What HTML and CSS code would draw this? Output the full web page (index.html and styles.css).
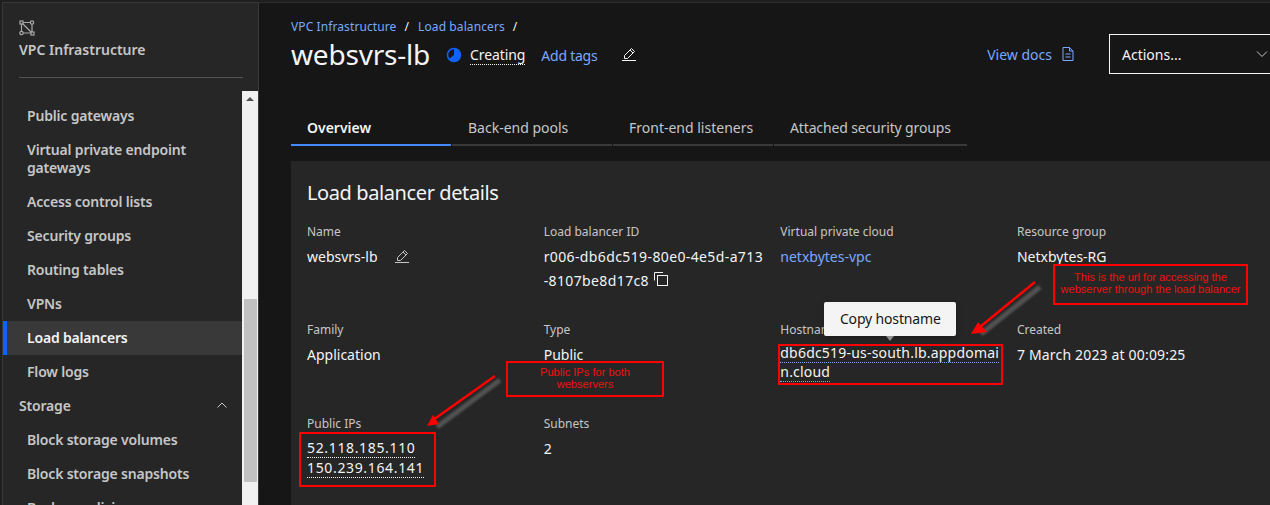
FILE: index.html
```html
<!DOCTYPE html>
<html lang="en">

<head>
    <meta charset="UTF-8">
    <title>websvrs-lb</title>
    <link rel="stylesheet" href="styles.css">
</head>

<body>
    <div class="page">
        <aside class="sidebar">
            <div class="side-head">
                <svg class="side-logo" width="16" height="16" viewBox="0 0 16 16" fill="none" stroke="#a8a8a8" stroke-width="1.200">
                    <rect x="1" y="1" width="3" height="3"/>
                    <circle cx="13" cy="2.500" r="1.700"/>
                    <circle cx="2.500" cy="13" r="1.700"/>
                    <rect x="12" y="12" width="3" height="3"/>
                    <path d="M4 2.500h7.300M2.500 4v7.300M4.200 13H12M13 4.200V12M4 4l8 8"/>
                </svg>
                <div class="side-title">VPC Infrastructure</div>
                <div class="side-rule"></div>
            </div>
            <div class="side-body">
                <nav class="side-nav">
                    <a class="nav-item">Public gateways</a>
                    <a class="nav-item">Virtual private endpoint gateways</a>
                    <a class="nav-item">Access control lists</a>
                    <a class="nav-item">Security groups</a>
                    <a class="nav-item">Routing tables</a>
                    <a class="nav-item">VPNs</a>
                    <a class="nav-item active">Load balancers</a>
                    <a class="nav-item">Flow logs</a>
                    <div class="nav-group">
                        <span>Storage</span>
                        <svg width="16" height="16" viewBox="0 0 16 16" fill="none" stroke="#c6c6c6" stroke-width="1"><path d="M3.500 10.500L8 6l4.500 4.500"/></svg>
                    </div>
                    <a class="nav-item">Block storage volumes</a>
                    <a class="nav-item">Block storage snapshots</a>
                    <a class="nav-item">Backup policies</a>
                </nav>
                <div class="scrollbar">
                    <div class="scroll-up"></div>
                    <div class="scroll-thumb"></div>
                </div>
            </div>
        </aside>

        <main class="main">
            <div class="crumbs">
                <a>VPC Infrastructure</a><span class="slash">/</span><a>Load balancers</a><span class="slash">/</span>
            </div>
            <div class="title-row">
                <h1>websvrs-lb</h1>
                <svg class="status-icon" width="16" height="16" viewBox="0 0 16 16">
                    <circle cx="8" cy="8" r="6.500" fill="none" stroke="#0f62fe" stroke-width="1.500"/>
                    <path d="M8 8V1.500A6.500 6.500 0 1 1 2.800 12z" fill="#0f62fe"/>
                </svg>
                <span class="status">Creating</span>
                <a class="add-tags">Add tags</a>
                <svg class="edit-icon" width="16" height="16" viewBox="0 0 16 16" fill="none" stroke="#f4f4f4" stroke-width="1">
                    <path d="M1 14.500h14M3.500 12.500v-3L10.500 2.500l3 3-7 7zM9 4l3 3"/>
                </svg>
                <div class="title-actions">
                    <a class="docs">View docs</a>
                    <svg class="docs-icon" width="16" height="16" viewBox="0 0 16 16" fill="none" stroke="#78a9ff" stroke-width="1">
                        <path d="M3 1.500h6.500l3.500 3.500v9.500H3zM9.500 1.500V5H13M5.500 8h5M5.500 11h5"/>
                    </svg>
                    <div class="actions">
                        <span>Actions...</span>
                        <svg width="16" height="16" viewBox="0 0 16 16" fill="none" stroke="#c6c6c6" stroke-width="1"><path d="M3 5.500L8 10.500l5-5"/></svg>
                    </div>
                </div>
            </div>

            <div class="tabs">
                <div class="tab selected">Overview</div>
                <div class="tab">Back-end pools</div>
                <div class="tab">Front-end listeners</div>
                <div class="tab wide">Attached security groups</div>
            </div>

            <section class="card">
                <h2>Load balancer details</h2>
                <div class="details">
                    <div class="field">
                        <div class="label">Name</div>
                        <div class="value">websvrs-lb
                            <svg class="name-edit" width="16" height="16" viewBox="0 0 16 16" fill="none" stroke="#c6c6c6" stroke-width="1">
                                <path d="M1 14.500h14M3.500 12.500v-3L10.500 2.500l3 3-7 7zM9 4l3 3"/>
                            </svg>
                        </div>
                    </div>
                    <div class="field">
                        <div class="label">Load balancer ID</div>
                        <div class="value code">r006-db6dc519-80e0-4e5d-a713-8107be8d17c8
                            <svg class="copy-icon" width="16" height="16" viewBox="0 0 16 16" fill="none" stroke="#f4f4f4" stroke-width="1">
                                <rect x="4.500" y="4.500" width="10" height="10"/>
                                <path d="M1.500 9.500V1.500H10"/>
                            </svg>
                        </div>
                    </div>
                    <div class="field">
                        <div class="label">Virtual private cloud</div>
                        <div class="value link">netxbytes-vpc</div>
                    </div>
                    <div class="field">
                        <div class="label">Resource group</div>
                        <div class="value">Netxbytes-RG</div>
                    </div>

                    <div class="field">
                        <div class="label">Family</div>
                        <div class="value">Application</div>
                    </div>
                    <div class="field">
                        <div class="label">Type</div>
                        <div class="value">Public</div>
                    </div>
                    <div class="field">
                        <div class="label">Hostname</div>
                        <div class="value host"><span class="dotted-blue">db6dc519-us-south.lb.appdomain.cloud</span></div>
                        <div class="tooltip">Copy hostname</div>
                    </div>
                    <div class="field">
                        <div class="label">Created</div>
                        <div class="value date">7 March 2023 at 00:09:25</div>
                    </div>

                    <div class="field">
                        <div class="label">Public IPs</div>
                        <div class="value ips">
                            <span class="dotted">52.118.185.110</span>
                            <span class="dotted">150.239.164.141</span>
                        </div>
                    </div>
                    <div class="field">
                        <div class="label">Subnets</div>
                        <div class="value">2</div>
                    </div>
                </div>
            </section>
        </main>

        <!-- red markup someone drew on top of the screenshot -->
        <div class="note note-url">This is the url for accessing the webserver through the load balancer</div>
        <div class="note note-ips">Public IPs for both webservers</div>
        <div class="mark mark-host"></div>
        <div class="mark mark-ips"></div>
        <svg class="arrows" width="1270" height="505" viewBox="0 0 1270 505">
            <g class="arrow-shadow" fill="none" stroke="#666" stroke-width="5">
                <path d="M1040 287L981 334"/>
                <path d="M500 380L437 427"/>
            </g>
            <g stroke="#f00" fill="none" stroke-width="2.500">
                <path d="M1035 282L980 327"/>
                <path d="M495 376L433 420"/>
            </g>
            <path d="M971 334L978 322L987 332z" fill="#f00"/>
            <path d="M427 426L433 415L439 424z" fill="#f00"/>
        </svg>
    </div>
</body>
</html>
```

FILE: styles.css
```css
* {
    box-sizing: border-box;
}

html,
body {
    margin: 0;
    height: 100%;
    overflow: hidden;
    background-color: #161616;
}

body {
    font-family: "Noto Sans", sans-serif;
    font-size: 14px;
    color: #f4f4f4;
}

.page {
    position: relative;
    display: flex;
    width: 1270px;
    height: 505px;
    overflow: hidden;
    border-top: 2px solid #1f1f1f;
    border-left: 2px solid #1f1f1f;
}

/* sidebar */
.sidebar {
    display: flex;
    flex-direction: column;
    flex: none;
    width: 257px;
    background-color: #262626;
    border-top: 1px solid #393939;
    border-left: 1px solid #393939;
    border-right: 1px solid #393939;
}

.side-head {
    height: 88px;
    padding: 17px 15px 0 16px;
}

.side-logo {
    display: block;
    margin-bottom: 3px;
}

.side-title {
    height: 22px;
    line-height: 22px;
    font-weight: 600;
    color: #c6c6c6;
}

.side-rule {
    height: 1px;
    margin-top: 16px;
    background-color: #525252;
}

.side-body {
    display: flex;
    flex: 1;
    min-height: 0;
}

.side-nav {
    flex: 1;
    padding-top: 8px;
    letter-spacing: -0.18px;
}

.nav-item {
    display: block;
    padding: 8px 24px;
    line-height: 18px;
    font-weight: 600;
    color: #c6c6c6;
}

.nav-item.active {
    color: #f4f4f4;
    background-color: #393939;
    border-left: 4px solid #0f62fe;
    padding-left: 20px;
}

.nav-group {
    display: flex;
    justify-content: space-between;
    align-items: center;
    height: 34px;
    padding: 0 12px 2px 16px;
    font-weight: 600;
    color: #c6c6c6;
}

.scrollbar {
    flex: none;
    width: 16px;
    background-color: #f1f1f1;
}

.scroll-up {
    width: 0;
    margin: 6px auto 0;
    border: 4px solid transparent;
    border-top: 0;
    border-bottom: 4px solid #505050;
}

.scroll-thumb {
    width: 13px;
    height: 183px;
    margin-top: 198px;
    margin-left: 2px;
    background-color: #c1c1c1;
}

/* main column */
.main {
    flex: 1;
    min-width: 0;
    padding: 15px 0 0 32px;
    border-top: 1px solid #2e2e2e;
}

.crumbs {
    height: 18px;
    line-height: 18px;
    font-size: 12px;
    letter-spacing: 0.1px;
    color: #f4f4f4;
}

.crumbs a {
    color: #78a9ff;
}

.slash {
    margin: 0 9px 0 8px;
}

.title-row {
    display: flex;
    align-items: center;
    height: 38px;
    margin-top: -1px;
}

h1 {
    margin: 0;
    font-size: 28px;
    font-weight: 400;
    letter-spacing: -0.2px;
    color: #f4f4f4;
}

.status-icon {
    margin: 2px 0 0 16px;
}

.status {
    margin: 2px 0 0 8px;
    letter-spacing: -0.1px;
    border-bottom: 1px dotted #f4f4f4;
}

.add-tags {
    margin: 2px 0 0 16px;
    letter-spacing: -0.25px;
    color: #78a9ff;
}

.edit-icon {
    margin-left: 24px;
}

.title-actions {
    display: flex;
    align-items: center;
    margin-left: auto;
}

.docs {
    color: #78a9ff;
}

.docs-icon {
    margin-left: 8px;
}

.actions {
    display: flex;
    justify-content: space-between;
    align-items: center;
    width: 161px;
    height: 40px;
    margin-left: 33px;
    padding: 0 0 0 12px;
    border: 1px solid #f4f4f4;
    border-right: 0;
}

.tabs {
    display: flex;
    gap: 1px;
    margin-top: 37px;
}

.tab {
    width: 160px;
    height: 36px;
    padding: 8px 16px 0;
    white-space: nowrap;
    color: #c6c6c6;
    border-bottom: 2px solid #393939;
}

.tab.wide {
    width: 193px;
    letter-spacing: -0.14px;
}

.tab.selected {
    font-weight: 600;
    color: #f4f4f4;
    border-bottom-color: #4589ff;
}

/* card */
.card {
    height: 360px;
    margin-top: 15px;
    padding: 16px;
    background-color: #262626;
}

h2 {
    margin: 2px 0 0;
    height: 28px;
    line-height: 28px;
    font-size: 20px;
    font-weight: 400;
    letter-spacing: -0.4px;
    color: #f4f4f4;
}

.details {
    display: grid;
    grid-template-columns: repeat(4, 221px);
    grid-template-rows: 98px 94px auto;
    column-gap: 15.67px;
    margin-top: 14px;
}

.field {
    position: relative;
}

.label {
    height: 18px;
    line-height: 18px;
    font-size: 12px;
    color: #c6c6c6;
    margin-top: 2px;
}

.value {
    margin-top: 4px;
    line-height: 24px;
}

.value.link {
    color: #78a9ff;
}

.value.code {
    word-break: break-all;
    letter-spacing: 0.38px;
}

.value.date {
    letter-spacing: 0.17px;
}

.value.host {
    line-height: 19px;
    word-break: break-all;
    letter-spacing: 0.2px;
}

.value.ips {
    display: flex;
    flex-direction: column;
    align-items: flex-start;
    margin-top: 5px;
    line-height: 19px;
    letter-spacing: 0.65px;
}

.dotted {
    border-bottom: 1px dotted #f4f4f4;
}

.dotted-blue {
    border-bottom: 1px dotted #78a9ff;
}

.name-edit {
    margin-left: 13px;
    vertical-align: -2px;
}

.copy-icon {
    vertical-align: -1px;
}

/* floats over the Hostname label */
.tooltip {
    position: absolute;
    left: 44px;
    top: -17px;
    width: 132px;
    height: 34px;
    line-height: 34px;
    text-align: center;
    letter-spacing: -0.15px;
    color: #161616;
    background-color: #f4f4f4;
    border-radius: 2px;
    box-shadow: 0 2px 6px rgba(0, 0, 0, 0.3);
}

.tooltip::after {
    content: "";
    position: absolute;
    left: 62px;
    top: 34px;
    border: 4px solid transparent;
    border-top: 5px solid #8d8d8d;
    border-bottom: 0;
}

/* annotations */
.note {
    position: absolute;
    display: flex;
    align-items: center;
    justify-content: center;
    text-align: center;
    line-height: 12px;
    font-family: "Liberation Sans", sans-serif;
    font-size: 11.1px;
    color: #f01010;
    border: 2px solid #f00;
}

.note-url {
    left: 1051px;
    top: 262px;
    width: 195px;
    height: 41px;
    padding: 0 0 3px;
}

.note-ips {
    left: 504px;
    top: 359px;
    width: 158px;
    height: 36px;
    padding: 0 30px 2px;
}

.mark {
    position: absolute;
    border: 2px solid #f00;
}

.mark-host {
    left: 776px;
    top: 342px;
    width: 225px;
    height: 41px;
}

.mark-ips {
    left: 297px;
    top: 430px;
    width: 137px;
    height: 55px;
}

.arrows {
    position: absolute;
    left: -2px;
    top: -2px;
}

.arrow-shadow {
    filter: blur(1px);
    opacity: 0.7;
}
```
